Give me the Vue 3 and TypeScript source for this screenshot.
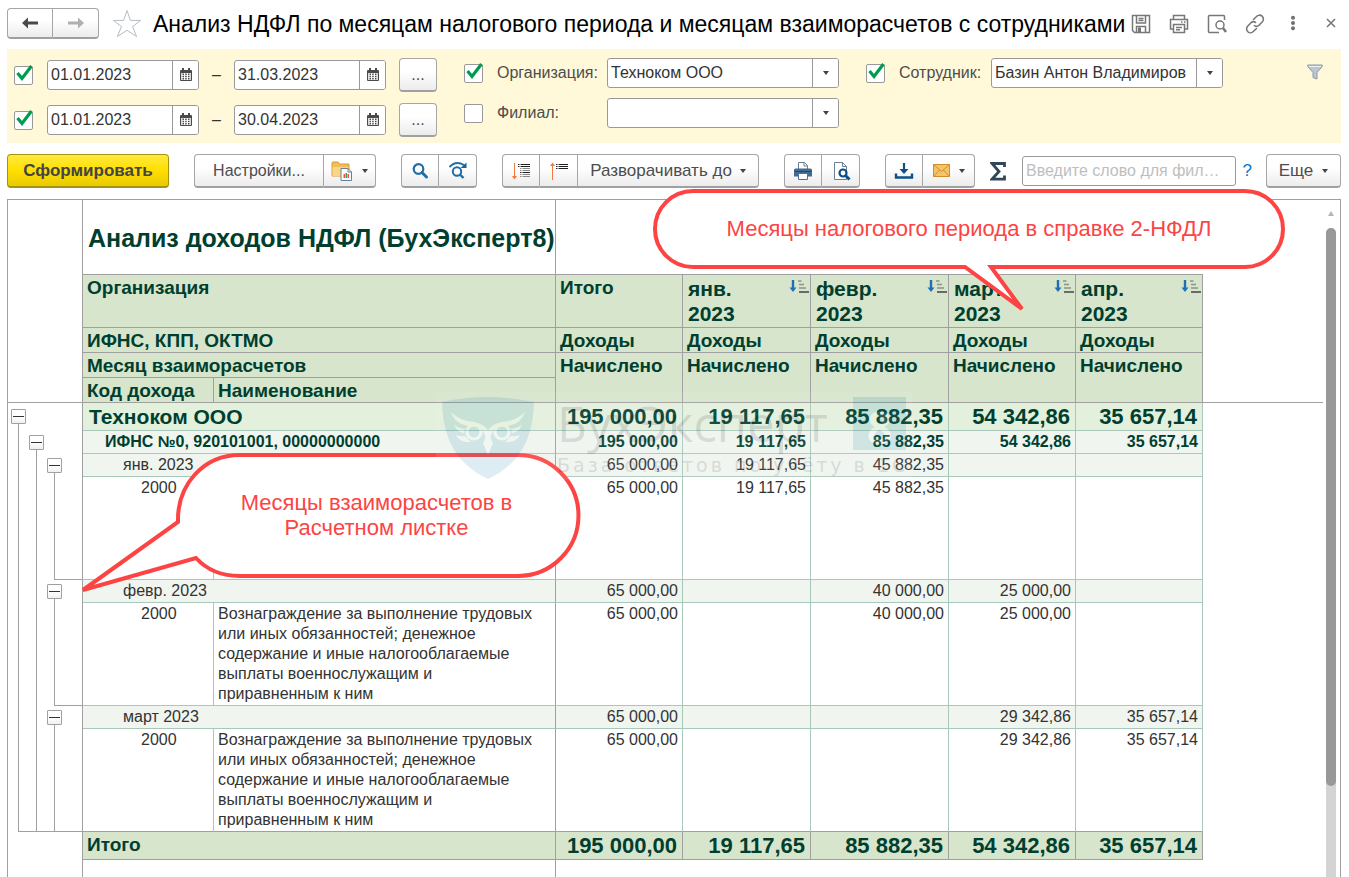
<script setup lang="ts">
import { ref } from 'vue'

interface PeriodRow { on: boolean; from: string; to: string }
type Rail = 'node' | 'line' | ''
interface ReportRow {
  kind: 'org' | 'ifns' | 'month' | 'code'
  label: string
  name?: string
  rails: Rail[]
  close?: string
  values: string[]
}

const title = 'Анализ НДФЛ по месяцам налогового периода и месяцам взаиморасчетов с сотрудниками'
const periods = ref<PeriodRow[]>([
  { on: true, from: '01.01.2023', to: '31.03.2023' },
  { on: true, from: '01.01.2023', to: '30.04.2023' },
])
const useOrg = ref(true)
const useBranch = ref(false)
const useEmployee = ref(true)
const org = ref('Техноком ООО')
const branch = ref('')
const employee = ref('Базин Антон Владимиров')
const search = ref('')

const months = ['янв.', 'февр.', 'март', 'апр.']
const incomeName =
  'Вознаграждение за выполнение трудовых или иных обязанностей; денежное содержание и иные налогооблагаемые выплаты военнослужащим и приравненным к ним'
const totals = ['195 000,00', '19 117,65', '85 882,35', '54 342,86', '35 657,14']

const rows: ReportRow[] = [
  { kind: 'org', label: 'Техноком ООО', rails: ['node'], values: totals },
  { kind: 'ifns', label: 'ИФНС №0, 920101001, 00000000000', rails: ['line', 'node'], values: totals },
  { kind: 'month', label: 'янв. 2023', rails: ['line', 'line', 'node'], values: ['65 000,00', '19 117,65', '45 882,35', '', ''] },
  { kind: 'code', label: '2000', name: '', rails: ['line', 'line', 'line'], close: 'close-month', values: ['65 000,00', '19 117,65', '45 882,35', '', ''] },
  { kind: 'month', label: 'февр. 2023', rails: ['line', 'line', 'node'], values: ['65 000,00', '', '40 000,00', '25 000,00', ''] },
  { kind: 'code', label: '2000', name: incomeName, rails: ['line', 'line', 'line'], close: 'close-month', values: ['65 000,00', '', '40 000,00', '25 000,00', ''] },
  { kind: 'month', label: 'март 2023', rails: ['line', 'line', 'node'], values: ['65 000,00', '', '', '29 342,86', '35 657,14'] },
  { kind: 'code', label: '2000', name: incomeName, rails: ['line', 'line', 'line'], close: 'close-all', values: ['65 000,00', '', '', '29 342,86', '35 657,14'] },
]
</script>

<template>
  <div class="page">
    <header class="titlebar">
      <div class="group nav">
        <button type="button" class="btn" aria-label="Назад">
          <svg width="18" height="14" viewBox="0 0 18 14"><path d="M1 7 7 1.500v4h10v3H7v4z" fill="#4a4a4a" /></svg>
        </button>
        <button type="button" class="btn" aria-label="Вперед">
          <svg width="18" height="14" viewBox="0 0 18 14"><path d="M17 7 11 1.500v4H1v3h10v4z" fill="#b0b0b0" /></svg>
        </button>
      </div>
      <button type="button" class="plain star" aria-label="В избранное">
        <svg width="30" height="30" viewBox="0 0 30 30">
          <path d="M15 1.500 18.400 11.400H28.600L20.600 17.600 24.600 27.500 15 21.300 5.400 27.500 9.400 17.600 1.400 11.400H11.600z" fill="#fff" stroke="#b4bcc6" />
        </svg>
      </button>
      <h1>{{ title }}</h1>
      <div class="window-tools">
        <button type="button" class="plain" aria-label="Сохранить">
          <svg width="20" height="20" viewBox="0 0 20 20" fill="none" stroke="#777" stroke-width="1.500">
            <path d="M1.500 1.500h17v17h-15l-2-2z" /><path d="M5.500 2v7h9V2M7.500 4.500h5M7.500 6.500h5M5.500 18v-5.500h9V18" /><path d="M7 13.500h3V18H7z" fill="#777" stroke="none" />
          </svg>
        </button>
        <button type="button" class="plain" aria-label="Печать">
          <svg width="20" height="20" viewBox="0 0 20 20" fill="none" stroke="#777" stroke-width="1.500">
            <path d="M4.500 5V1.500h11V5M4.500 15h-3V5.500h17V15h-3" /><path d="M4.500 10.500h11v8h-11zM12 8h1.500M15 8h1.500M7 13.500h6M7 15.800h4" />
          </svg>
        </button>
        <button type="button" class="plain" aria-label="Предварительный просмотр">
          <svg width="20" height="20" viewBox="0 0 20 20" fill="none" stroke="#777" stroke-width="1.500">
            <path d="M17.500 6V2.500q0-1-1-1H2.500q-1 0-1 1v15q0 1 1 1H12" /><circle cx="13" cy="11" r="4" /><path d="m16 14 3 4" stroke-width="2.500" />
          </svg>
        </button>
        <button type="button" class="plain" aria-label="Ссылка">
          <svg width="20" height="20" viewBox="0 0 20 20" fill="none" stroke="#777" stroke-width="1.600" stroke-linecap="round">
            <path d="M8.500 5.500 11.500 2.500a3.800 3.800 0 0 1 5.900 5.200L14 11.200a3.500 3.500 0 0 1-4.500.400" />
            <path d="M11.500 14.500 8.300 17.500a3.800 3.800 0 0 1-5.700-5.200L6 8.800a3.500 3.500 0 0 1 4.500-.400" />
          </svg>
        </button>
        <button type="button" class="plain" aria-label="Дополнительно">
          <svg width="20" height="20" viewBox="0 0 20 20" fill="#707070"><circle cx="10" cy="3.800" r="2" /><circle cx="10" cy="9" r="2" /><circle cx="10" cy="14.200" r="2" /></svg>
        </button>
        <button type="button" class="plain" aria-label="Закрыть">
          <svg width="20" height="20" viewBox="0 0 20 20"><path d="m6 5 8 8M14 5l-8 8" stroke="#777" stroke-width="1.600" /></svg>
        </button>
      </div>
    </header>

    <section class="filters">
      <div class="periods">
        <div v-for="(p, i) in periods" :key="i" class="period">
          <span class="check">
            <input v-model="p.on" type="checkbox" :aria-label="`Период ${i + 1}`" />
            <svg v-if="p.on" width="20" height="19" viewBox="0 0 20 19"><path d="M3.500 9 8 14.500 17.500 2" fill="none" stroke="#009c4e" stroke-width="3.200" /></svg>
          </span>
          <template v-for="side in (['from', 'to'] as const)" :key="side">
            <span v-if="side === 'to'" class="dash">–</span>
            <span class="field date">
              <input v-model="p[side]" type="text" :aria-label="side === 'from' ? 'Начало' : 'Окончание'" />
              <button type="button" aria-label="Календарь">
                <svg width="12" height="14" viewBox="0 0 12 14">
                  <path d="M0 3q0-1 1-1h10q1 0 1 1v9q0 1-1 1H1q-1 0-1-1z" fill="#4a4a4a" /><path d="M2 0h2v3H2zM8 0h2v3H8z" fill="#4a4a4a" />
                  <path d="M1.200 5h9.600v7H1.200z" fill="#fff" />
                  <path d="M2.500 5.500h1.500V7H2.500zM5.200 5.500h1.500V7H5.200zM8 5.500h1.500V7H8zM2.500 7.800h1.500v1.500H2.500zM5.200 7.800h1.500v1.500H5.200zM8 7.800h1.500v1.500H8zM2.500 10h1.500v1.500H2.500zM5.200 10h1.500v1.500H5.200zM8 10h1.500v1.500H8z" fill="#4a4a4a" />
                </svg>
              </button>
            </span>
          </template>
          <button type="button" class="btn more">...</button>
        </div>
      </div>

      <div class="combos">
        <div class="combo-row">
          <span class="check">
            <input v-model="useOrg" type="checkbox" aria-label="Отбор по организации" />
            <svg v-if="useOrg" width="20" height="19" viewBox="0 0 20 19"><path d="M3.500 9 8 14.500 17.500 2" fill="none" stroke="#009c4e" stroke-width="3.200" /></svg>
          </span>
          <label for="org">Организация:</label>
          <span class="field combo"><input id="org" v-model="org" type="text" /><button type="button" aria-label="Выбрать организацию"><i class="caret"></i></button></span>
        </div>
        <div class="combo-row">
          <span class="check"><input v-model="useBranch" type="checkbox" aria-label="Отбор по филиалу" /></span>
          <label for="branch">Филиал:</label>
          <span class="field combo"><input id="branch" v-model="branch" type="text" /><button type="button" aria-label="Выбрать филиал"><i class="caret"></i></button></span>
        </div>
      </div>

      <div class="combos employee">
        <div class="combo-row">
          <span class="check">
            <input v-model="useEmployee" type="checkbox" aria-label="Отбор по сотруднику" />
            <svg v-if="useEmployee" width="20" height="19" viewBox="0 0 20 19"><path d="M3.500 9 8 14.500 17.500 2" fill="none" stroke="#009c4e" stroke-width="3.200" /></svg>
          </span>
          <label for="employee">Сотрудник:</label>
          <span class="field combo"><input id="employee" v-model="employee" type="text" /><button type="button" aria-label="Выбрать сотрудника"><i class="caret"></i></button></span>
        </div>
      </div>

      <button type="button" class="plain funnel" aria-label="Фильтр">
        <svg width="16" height="16" viewBox="0 0 16 16"><path d="M.800 1h14.400v1.500L10 8.500v6.500L6 13.500v-5L.800 2.500z" fill="#bcc6cf" stroke="#8b99a6" /><path d="M2 2.500h12" stroke="#eef2f5" /></svg>
      </button>
    </section>

    <div class="toolbar">
      <button type="button" class="btn primary">Сформировать</button>
      <div class="group">
        <button type="button" class="btn settings">Настройки...</button>
        <button type="button" class="btn split" aria-label="Варианты отчета">
          <svg width="22" height="20" viewBox="0 0 22 20">
            <path d="M1 2q0-1 1-1h5l1.500 2H18v12H1z" fill="#f0bf5c" stroke="#d99c37" /><path d="M1.500 6h16v9h-16z" fill="#f8d58a" />
            <path d="M10 7.500h7l3.500 3.500v8.500H10z" fill="#fff" stroke="#6a7f92" /><path d="M17 7.500V11h3.500" fill="none" stroke="#6a7f92" />
            <path d="M12.500 17v-4h1.500v4z" fill="#e2574c" /><path d="M14.500 17v-5H16v5z" fill="#4c9a5a" /><path d="M16.500 17v-4H18v4z" fill="#e2574c" />
          </svg>
          <i class="caret"></i>
        </button>
      </div>
      <div class="group">
        <button type="button" class="btn icon" aria-label="Найти">
          <svg width="18" height="18" viewBox="0 0 18 18" fill="none" stroke="#1f6ea8"><circle cx="7.500" cy="7" r="4.800" stroke-width="2.200" /><path d="m11 10.500 4.500 4.500" stroke-width="3" stroke-linecap="round" /></svg>
        </button>
        <button type="button" class="btn icon" aria-label="Найти далее">
          <svg width="20" height="20" viewBox="0 0 20 20" fill="none" stroke="#1f6ea8"><path d="M1.500 6Q8-1 16 4" stroke-width="2" /><path d="M12.500 7h6V1.500z" fill="#1f5f92" stroke="none" /><circle cx="9" cy="10.500" r="4.200" stroke-width="2" /><path d="m12 13.500 3.500 3.500" stroke-width="2.400" /></svg>
        </button>
      </div>
      <div class="group">
        <button type="button" class="btn icon" aria-label="Развернуть группировки">
          <svg width="20" height="20" viewBox="0 0 20 20"><path d="M3.500 2v15" stroke="#f4793b" /><path d="M1 15h5l-2.500 3.500z" fill="#f4793b" /><path d="M7 3.500h1.500M9.500 3.500H19M7 5.500h1.500M9.500 5.500H19M9 11.500h1.500M11.500 11.500H19" stroke="#222" /><path d="M9 7.500h1.500M11.500 7.500H19M9 9.500h1.500M11.500 9.500H19M9 13.500h1.500M11.500 13.500H19M9 15.500h1.500M11.500 15.500H19" stroke="#888" /></svg>
        </button>
        <button type="button" class="btn icon" aria-label="Свернуть группировки">
          <svg width="20" height="20" viewBox="0 0 20 20"><path d="M3.500 19V3" stroke="#f4793b" /><path d="M1 5h5L3.500 1.500z" fill="#f4793b" /><path d="M7 3.500h1.500M9.500 3.500H19M7 5.500h1.500M9.500 5.500H19M7 7.500h1.500M9.500 7.500H19" stroke="#222" /></svg>
        </button>
        <button type="button" class="btn expand">Разворачивать до <i class="caret"></i></button>
      </div>
      <div class="group">
        <button type="button" class="btn icon" aria-label="Печать отчета">
          <svg width="20" height="20" viewBox="0 0 20 20"><path d="M5.500 8V1.500h6l3 3V8" fill="#fff" stroke="#6a7f92" /><path d="M11 1.500V5h3.500" fill="none" stroke="#6a7f92" /><path d="M1 9q0-1.500 1.500-1.500h15Q19 7.500 19 9v6.500H1z" fill="#436a92" /><path d="M1.500 10.500h17" stroke="#21486f" /><path d="M5.500 12.500h9v6h-9z" fill="#fff" stroke="#54708c" /></svg>
        </button>
        <button type="button" class="btn icon" aria-label="Просмотр отчета">
          <svg width="20" height="20" viewBox="0 0 20 20"><path d="M15.500 18.500h-12v-17h8l4 4z" fill="#fff" stroke="#6a7f92" /><path d="M11.500 1.500v4h4" fill="none" stroke="#6a7f92" /><circle cx="12" cy="12" r="3.500" fill="#fff" stroke="#0d4f86" stroke-width="2.200" /><path d="m14.500 14.500 4 4" stroke="#0d4f86" stroke-width="3" /></svg>
        </button>
      </div>
      <div class="group">
        <button type="button" class="btn icon" aria-label="Сохранить отчет">
          <svg width="20" height="18" viewBox="0 0 20 18"><path d="M10 1v9" stroke="#0d4f86" stroke-width="2.200" /><path d="M5.500 7h9L10 12z" fill="#0d4f86" /><path d="M2 11.500v4h16v-4" fill="none" stroke="#0d4f86" stroke-width="2.400" /></svg>
        </button>
        <button type="button" class="btn split" aria-label="Отправить">
          <svg width="17" height="13" viewBox="0 0 17 13"><path d="M.500.500h16v12H.500z" fill="#f5c468" stroke="#cf8f2d" /><path d="m.500.500 8 7 8-7M.500 12.500l6-6.500M16.500 12.500l-6-6.500" fill="none" stroke="#cf8f2d" /></svg>
          <i class="caret"></i>
        </button>
      </div>
      <button type="button" class="plain sum" aria-label="Сумма">
        <svg width="16" height="19" viewBox="0 0 16 19"><path d="M14.500 5V1.500H2L9 9.500 2 17.200h12.500V13.500" fill="none" stroke="#33475b" stroke-width="2.800" /></svg>
      </button>
      <input v-model="search" class="search" type="text" aria-label="Поиск" placeholder="Введите слово для фил…" />
      <button type="button" class="plain help">?</button>
      <button type="button" class="btn also">Еще <i class="caret"></i></button>
    </div>

    <main class="report">
      <table>
        <colgroup>
          <col class="w-tree" /><col class="w-code" /><col class="w-name" /><col class="w-num" />
          <col class="w-jan" /><col class="w-feb" /><col class="w-num" /><col class="w-num" /><col />
        </colgroup>
        <thead>
          <tr class="caption-row">
            <td class="tree"></td>
            <th colspan="2" class="edge caption">Анализ доходов НДФЛ (БухЭксперт8)</th>
            <td colspan="5" class="lined"></td>
            <td></td>
          </tr>
          <tr class="months">
            <td class="tree"></td>
            <th colspan="2">Организация</th>
            <th>Итого</th>
            <th v-for="m in months" :key="m" class="month-head">
              <span class="month-box">
                <span>{{ m }}<br />2023</span>
                <svg width="20" height="15" viewBox="0 0 20 15">
                  <path d="M4 1v9" stroke="#1f6fb5" stroke-width="2.400" /><path d="M.500 8.500h7L4 13z" fill="#1f6fb5" />
                  <path d="M9 2h3.500M10 5.500h5M10 9h7" stroke="#8a948a" stroke-width="1.600" /><path d="M10 13h10" stroke="#4a4f4a" stroke-width="1.600" />
                </svg>
              </span>
            </th>
            <td></td>
          </tr>
          <tr class="sub">
            <td class="tree"></td>
            <th colspan="2">ИФНС, КПП, ОКТМО</th>
            <th v-for="n in 5" :key="n">Доходы</th>
            <td></td>
          </tr>
          <tr class="sub">
            <td class="tree"></td>
            <th colspan="2">Месяц взаиморасчетов</th>
            <th v-for="n in 5" :key="n" rowspan="2">Начислено</th>
            <td rowspan="2" class="lined"></td>
          </tr>
          <tr class="sub">
            <td class="tree lined"></td>
            <th>Код дохода</th>
            <th>Наименование</th>
          </tr>
        </thead>
        <tbody>
          <tr v-for="(r, i) in rows" :key="i" :class="[r.kind, { last: i === rows.length - 1 }]">
            <td class="tree">
              <span class="rails" :class="r.close">
                <span v-for="(rail, k) in r.rails" :key="k" class="rail" :class="rail">
                  <button v-if="rail === 'node'" type="button" aria-label="Свернуть"></button>
                </span>
              </span>
            </td>
            <td v-if="r.kind !== 'code'" colspan="2" class="edge label">{{ r.label }}</td>
            <template v-else>
              <td class="code-cell">{{ r.label }}</td>
              <td class="edge name">{{ r.name }}</td>
            </template>
            <td v-for="(v, k) in r.values" :key="k" class="num">{{ v }}</td>
            <td class="rest"></td>
          </tr>
        </tbody>
        <tfoot>
          <tr class="total">
            <td class="tree"></td>
            <th colspan="2" class="edge">Итого</th>
            <td v-for="v in totals" :key="v" class="num">{{ v }}</td>
            <td class="rest"></td>
          </tr>
          <tr class="tail">
            <td class="tree"></td>
            <td colspan="2" class="edge"></td>
            <td colspan="6"></td>
          </tr>
        </tfoot>
      </table>

      <div class="scroll">
        <i class="up"></i>
        <div class="track"><div class="thumb"></div></div>
      </div>

      <div class="callout settle">
        <svg width="506" height="134" viewBox="0 0 506 134">
          <path d="M164 8H442A60 60 0 0 1 442 129H164C145 129 130 122 120 111L7 143 102 75C101 37 128 8 164 8z" transform="translate(0 -4)" fill="#fff" stroke="#fd4444" stroke-width="4" />
        </svg>
        <p>Месяцы взаиморасчетов в<br />Расчетном листке</p>
      </div>

      <div class="callout tax">
        <svg width="634" height="126" viewBox="0 0 634 126">
          <path d="M41 4H593A38 38 0 0 1 593 80H339L370 122 313 80H41A38 38 0 0 1 41 4z" fill="#fff" stroke="#fd4444" stroke-width="4" />
        </svg>
        <p>Месяцы налогового периода в справке 2-НФДЛ</p>
      </div>

      <div class="watermark">
        <svg width="92" height="82" viewBox="0 0 92 82">
          <path d="M0 5Q46-5 92 5C91 44 76 68 46 82 16 68 1 44 0 5z" fill="#3a96bc" />
          <g fill="none" stroke="#fff" stroke-width="3"><circle cx="32" cy="35" r="7" /><circle cx="60" cy="35" r="7" /></g>
          <path d="M9 15Q18 24 32 25 42 27 46 33 50 27 60 25 74 24 83 15 79 28 64 29 52 29 49 38L46 50 43 38Q40 29 28 29 13 28 9 15zM12 27Q15 31 23 32L22 36Q14 35 12 27zM80 27Q77 31 69 32L70 36Q78 35 80 27zM14 38Q18 40 23 39L29 45Q18 46 14 38zM78 38Q74 40 69 39L63 45Q74 46 78 38z" fill="#fff" />
          <path d="m46 36 5 10-5 12-5-12z" fill="#fff" />
        </svg>
        <div class="brand"><span>БухЭксперт</span><small>База ответов по учёту в 1С</small></div>
        <b>8</b>
      </div>
    </main>
  </div>
</template>

<style>
body { background: #fff; }
</style>

<style scoped>
.page {
  box-sizing: border-box;
  min-height: 100vh;
  padding: 0 8px 0 7px;
  display: flex;
  flex-direction: column;
  font: 16px/20px "Liberation Sans", Arial, sans-serif;
  color: #333;
}
button, input { font: inherit; color: inherit; margin: 0; box-sizing: border-box; }
button { cursor: pointer; }
svg { display: block; flex: none; }
.plain { border: 0; background: none; padding: 0; display: flex; align-items: center; }
.btn {
  height: 34px;
  padding: 0;
  display: flex;
  align-items: center;
  justify-content: center;
  border: 1px solid #a6a6a6;
  border-bottom: 2px solid #a0a0a0;
  border-radius: 4px;
  background: linear-gradient(#fff 40%, #ececec);
  color: #4d4d4d;
  white-space: nowrap;
}
.group { display: flex; flex: none; }
.group .btn + .btn { border-left: 0; }
.group .btn:first-child { border-radius: 4px 0 0 4px; }
.group .btn:last-child { border-radius: 0 4px 4px 0; }
.group .btn:not(:first-child):not(:last-child) { border-radius: 0; }
.caret { display: block; width: 0; height: 0; border: 3px solid transparent; border-top: 4px solid #444; border-bottom: 0; }

.titlebar { display: flex; align-items: center; padding: 8px 0 10px; }
.nav .btn { width: 46px; height: 31px; }
.star { margin: 0 11px 0 13px; }
h1 { margin: 0; font-size: 23px; line-height: 30px; font-weight: 400; color: #000; white-space: nowrap; }
.window-tools { margin-left: auto; display: flex; gap: 18px; }

.filters { display: flex; align-items: flex-start; padding: 9px 18px 6px 7px; background: #fff9d9; }
.periods { display: flex; flex-direction: column; gap: 11px; }
.period, .combo-row { display: flex; align-items: center; }
.combos { display: flex; flex-direction: column; gap: 10px; margin-left: 27px; }
.check { position: relative; width: 19px; height: 19px; margin-right: 14px; flex: none; }
.check input { appearance: none; display: block; width: 19px; height: 19px; background: #fff; border: 1px solid #999; border-radius: 2px; }
.check svg { position: absolute; left: 0; top: -2px; pointer-events: none; }
.field { display: flex; box-sizing: border-box; height: 30px; border: 1px solid #999; border-radius: 3px; background: #fff; overflow: hidden; }
.field input { flex: 1; min-width: 0; border: 0; padding: 0 0 0 3px; background: none; outline: 0; }
.field button { width: 26px; padding: 0; border: 0; border-left: 1px solid #999; background: #fff; display: flex; align-items: center; justify-content: center; flex: none; }
.date { width: 152px; }
.dash { width: 35px; text-align: center; }
.more { width: 38px; margin-left: 13px; }
.combo-row label { width: 110px; color: #4d4d4d; }
.employee label { width: 92px; }
.combo { width: 232px; }
.funnel { margin: 6px 0 0 auto; }

.toolbar { display: flex; align-items: center; padding: 11px 0; }
.toolbar > .group { margin-left: 25px; }
.primary { width: 162px; font-size: 17px; font-weight: 700; color: #444; border-color: #a8930f; background: linear-gradient(#ffe93f, #ffdf00 50%, #e8ca00); }
.settings { width: 130px; }
.split { width: 52px; gap: 9px; }
.icon { width: 38px; }
.expand { width: 181px; gap: 8px; font-size: 17px; }
.sum { margin: 0 16px 0 15px; }
.search { flex: 1; min-width: 0; height: 30px; padding: 0 3px; border: 1px solid #999; border-radius: 3px; background: #fff; outline: 0; text-overflow: ellipsis; }
.search::placeholder { color: #bebebe; opacity: 1; }
.help { margin: 0 14px 0 7px; color: #0b74c4; font-size: 17px; }
.also { width: 75px; gap: 9px; font-size: 17px; }

.report { position: relative; flex: 1; display: flex; border: 1px solid #a0a0a0; border-bottom: 0; }
table { flex: 1; min-width: 0; width: 100%; table-layout: fixed; border-collapse: separate; border-spacing: 0; }
.w-tree { width: 75px; }
.w-code { width: 131px; }
.w-name { width: 342px; }
.w-num { width: 127px; }
.w-jan { width: 128px; }
.w-feb { width: 138px; }
td, th { box-sizing: border-box; padding: 0; text-align: left; vertical-align: top; font-weight: 400; }
.tree { position: relative; border-right: 1px solid #a0a0a0; }
.lined { border-bottom: 1px solid #a0a0a0; }
th { border-right: 1px solid #a0a0a0; border-bottom: 1px solid #a0a0a0; background: #d7e5cc; color: #003f2f; font-weight: 700; font-size: 19px; line-height: 23px; padding: 1px 0 0 4px; white-space: nowrap; }
.caption-row { height: 75px; }
th.caption { background: #fff; font-size: 25px; line-height: 30px; padding-left: 5px; vertical-align: middle; }
.months { height: 53px; }
th.month-head { font-size: 21px; line-height: 25px; padding: 1px 1px 0 5px; }
.month-box { display: flex; justify-content: space-between; }
.month-box svg { margin-top: 3px; }
.sub { height: 25px; }

tbody td:not(.tree):not(.rest) { border-right: 1px solid #a9c8bc; border-bottom: 1px solid #a9c8bc; line-height: 20px; padding-top: 1px; }
tbody td.edge.edge.edge { border-right-color: #a0a0a0; }
.org { height: 28px; font-size: 21px; font-weight: 700; color: #003f2f; }
.ifns { height: 23px; color: #003f2f; }
.month { height: 23px; }
.code { height: 103px; }
.org td:not(.tree):not(.rest) { background: #e3f0dc; font-weight: 700; line-height: 26px; padding-top: 1px; }
.org td.label { padding-left: 6px; }
.ifns td:not(.tree):not(.rest) { background: #f0f5ef; font-weight: 700; }
.month td:not(.tree):not(.rest) { background: #f0f5ef; }
.ifns td.label { padding-left: 22px; }
.month td.label { padding-left: 40px; }
.code td.code-cell { padding-left: 58px; }
.code td.name { padding-left: 4px; padding-right: 8px; }
tr td.num { text-align: right; padding-right: 4px; white-space: nowrap; }
.org td.num, .total td.num { font-size: 22px; padding-right: 5px; }
tbody tr.last td:not(.tree):not(.rest) { border-bottom-color: #a0a0a0; }
.total { height: 28px; }
.total td.num { background: #d7e5cc; border-right: 1px solid #a0a0a0; border-bottom: 1px solid #a0a0a0; color: #003f2f; font-weight: 700; line-height: 27px; }
.tail { height: 17px; }
.tail .edge { border-right: 1px solid #a0a0a0; }

.rails { position: absolute; inset: 0; padding-left: 1px; display: flex; }
.rail { position: relative; width: 18px; }
.rail::before { content: ""; position: absolute; left: 9px; top: 0; bottom: 0; border-left: 1px solid #a0a0a0; }
.rail.node::before { top: 10px; }
.rail button { position: absolute; left: 2px; top: 4px; width: 15px; height: 15px; padding: 0; border: 1px solid #a0a0a0; border-radius: 1px; background: linear-gradient(#fff 50%, #f0f0f0); }
.org .rail button { top: 6px; }
.rail button::after { content: ""; position: absolute; left: 1px; right: 1px; top: 6px; height: 1px; background: #333; }
.rails.close-month::after, .rails.close-all::after { content: ""; position: absolute; right: 0; bottom: 0; left: 46px; height: 1px; background: #a0a0a0; }
.rails.close-all::after { left: 10px; }

.scroll { width: 17px; flex: none; display: flex; flex-direction: column; align-items: center; }
.up { margin: 11px 2px 12px 0; width: 0; height: 0; border: 3px solid transparent; border-bottom: 5px solid #b5b5b5; border-top: 0; }
.track { flex: 1; width: 10px; margin-right: 2px; background: #d4d4d4; border-radius: 5px 5px 0 0; }
.thumb { height: 86%; background: #989898; border-radius: 5px; }

.callout { position: absolute; pointer-events: none; }
.callout svg { overflow: visible; }
.callout p { position: absolute; margin: 0; color: #fd4444; font-size: 22px; line-height: 25px; text-align: center; white-space: nowrap; }
.settle { left: 68px; top: 251px; }
.settle p { left: 101px; right: 6px; top: 39px; }
.tax { left: 644px; top: -13px; }
.tax p { left: 0; right: 0; top: 29px; }

.watermark { position: absolute; left: 428px; top: 192px; box-sizing: border-box; width: 476px; height: 88px; padding: 5px 6px 0; display: flex; align-items: flex-start; background: rgba(255, 255, 255, 0.5); opacity: 0.160; pointer-events: none; }
.brand { margin-left: 23px; display: flex; flex-direction: column; flex: 1; width: 0; color: #556; }
.brand span { font: 49px/52px "Open Sans", sans-serif; }
.brand small { font: 19px/32px "DejaVu Sans", sans-serif; letter-spacing: 3px; white-space: nowrap; }
.watermark b { width: 53px; height: 53px; flex: none; background: #2f8fb0; color: #fff; font: 700 44px/60px "Open Sans", sans-serif; text-align: center; }
</style>
